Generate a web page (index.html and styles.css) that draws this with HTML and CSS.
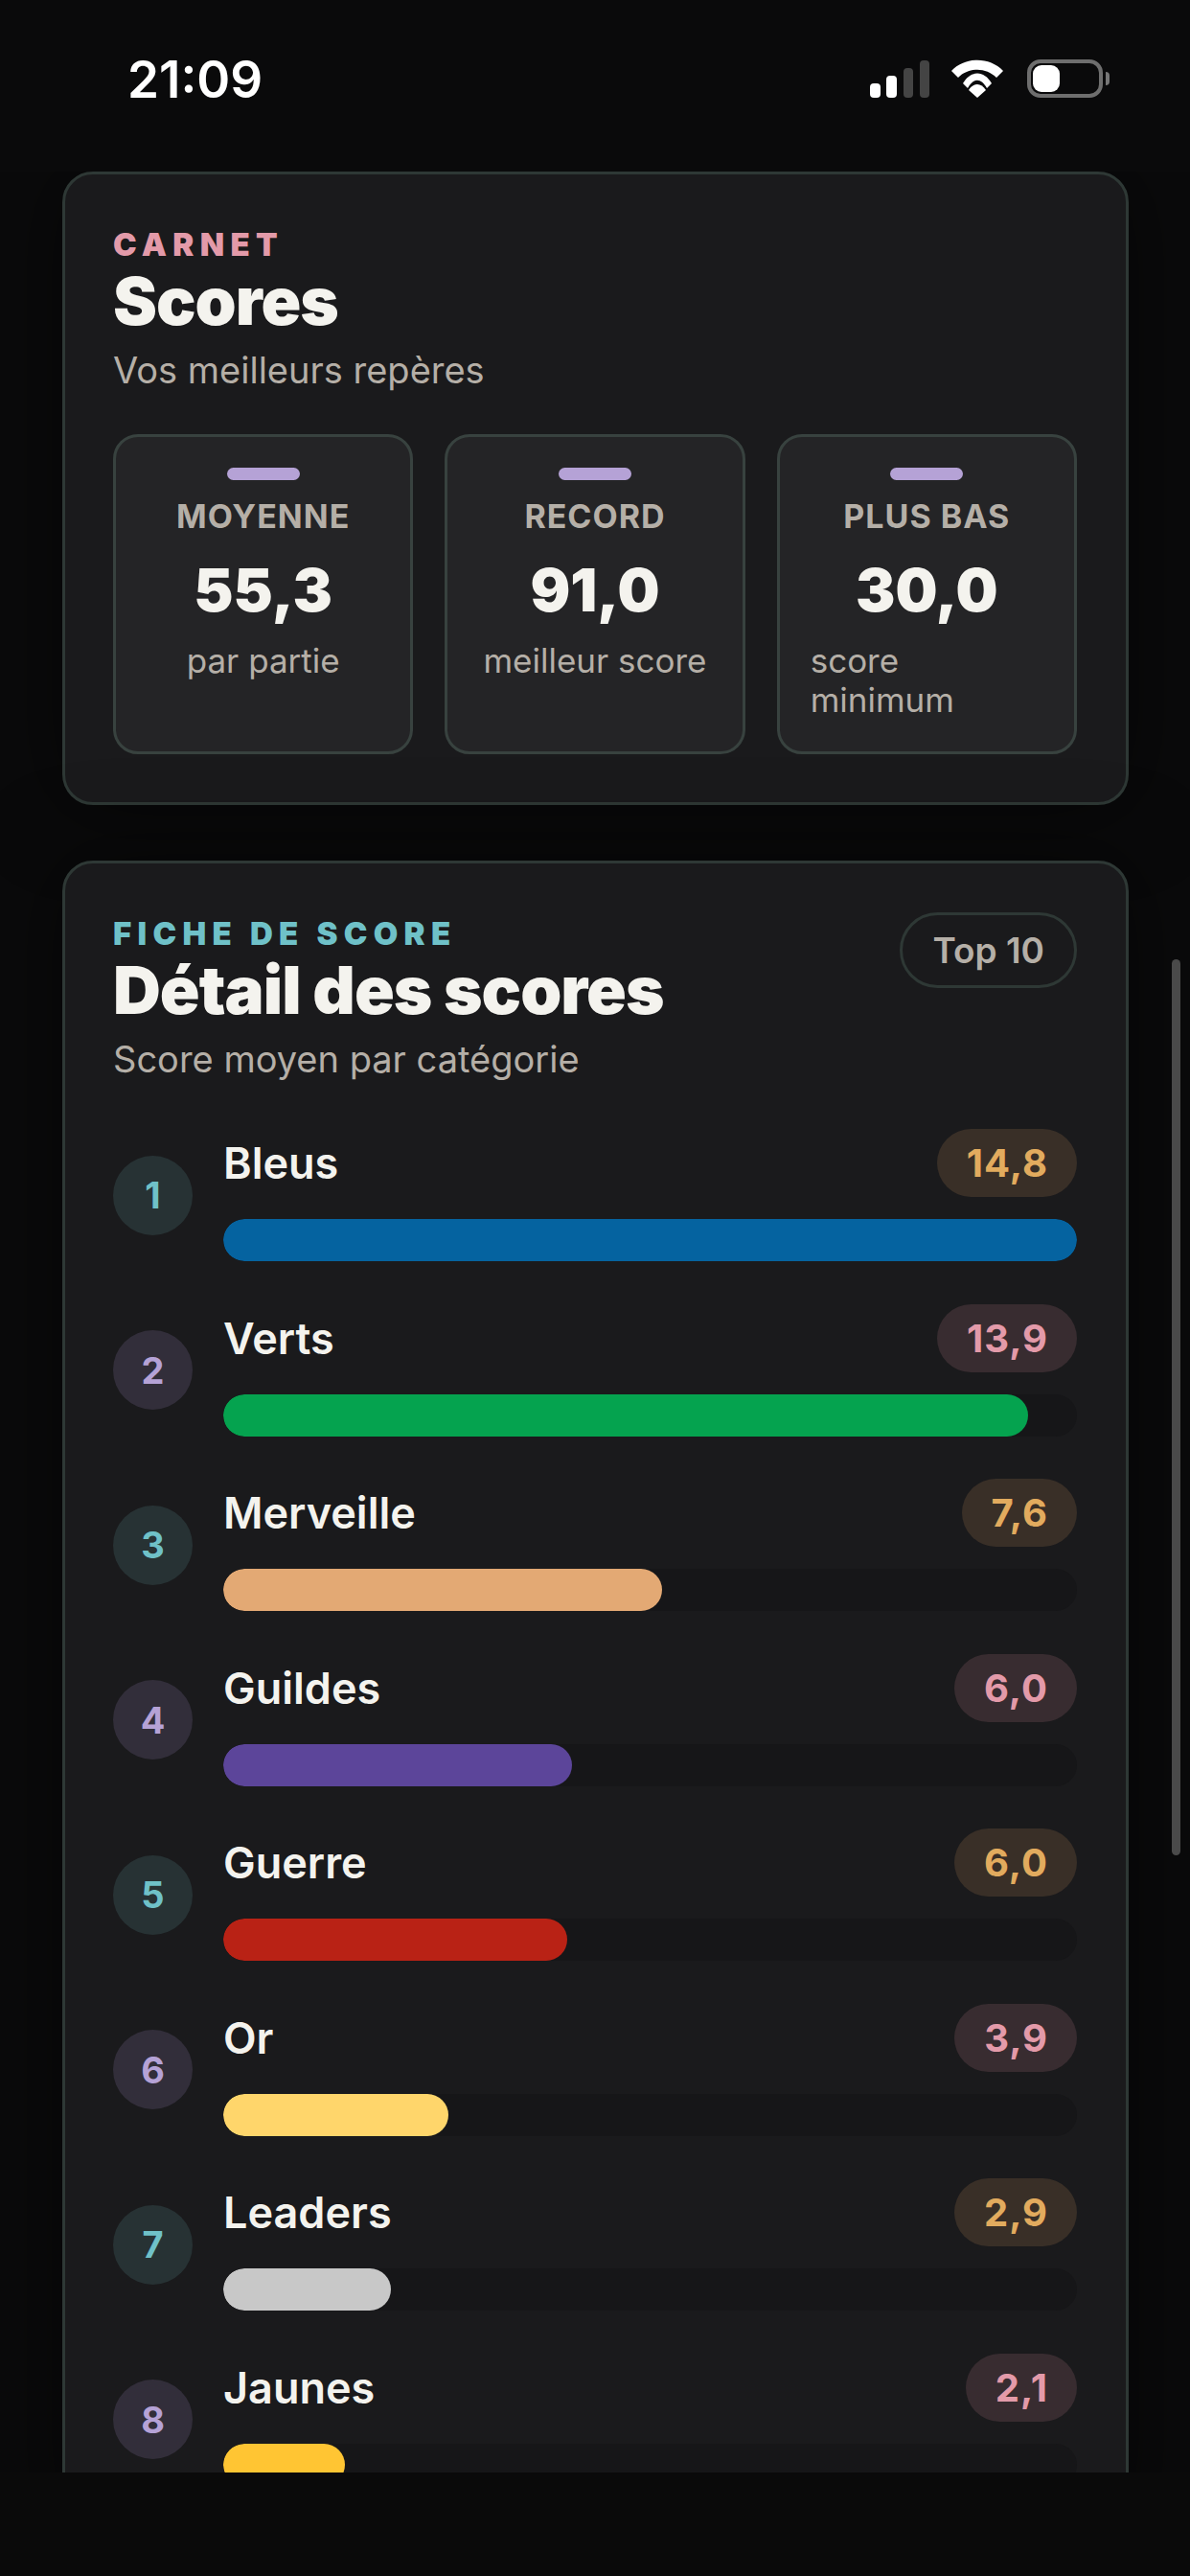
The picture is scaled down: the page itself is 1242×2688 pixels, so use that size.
FILE: index.html
```html
<!DOCTYPE html>
<html lang="fr">
<head>
    <meta charset="UTF-8">
    <meta name="viewport" content="width=device-width, initial-scale=1.0">
    <title>Scores</title>
    <link rel="stylesheet" href="styles.css">
</head>
<body>
    <div class="statusbar">
        <span class="time">21:09</span>
        <div class="status-icons">
            <svg class="signal" width="62" height="39" viewBox="0 0 62 39">
                <rect x="0" y="24" width="11" height="15" rx="4" fill="#fff"/>
                <rect x="17" y="16" width="11" height="23" rx="4" fill="#fff"/>
                <rect x="35" y="8" width="10" height="31" rx="4" fill="#444"/>
                <rect x="52" y="0" width="10" height="39" rx="4" fill="#444"/>
            </svg>
            <svg class="wifi" width="54" height="40" viewBox="0 0 54 40">
                <path d="M0 12C14 -3 40 -3 54 12L47 19C36 8 18 8 7 19Z" fill="#fff"/>
                <path d="M12 25C20 11 34 11 42 25L37 30C31 19 23 19 17 30Z" fill="#fff"/>
                <path d="M18 32C23 24 31 24 36 32L27 40Z" fill="#fff"/>
            </svg>
            <div class="battery"><div class="battery-level"></div></div>
            <div class="battery-nub"></div>
        </div>
    </div>

    <div class="scroller">
        <section class="card">
            <div class="eyebrow pink">CARNET</div>
            <h1 class="title">Scores</h1>
            <p class="subtitle">Vos meilleurs repères</p>
            <div class="stats">
                <div class="stat">
                    <div class="stat-mark"></div>
                    <div class="stat-label">MOYENNE</div>
                    <div class="stat-value">55,3</div>
                    <div class="stat-note">par partie</div>
                </div>
                <div class="stat">
                    <div class="stat-mark"></div>
                    <div class="stat-label">RECORD</div>
                    <div class="stat-value">91,0</div>
                    <div class="stat-note">meilleur score</div>
                </div>
                <div class="stat">
                    <div class="stat-mark"></div>
                    <div class="stat-label">PLUS BAS</div>
                    <div class="stat-value">30,0</div>
                    <div class="stat-note">score minimum</div>
                </div>
            </div>
        </section>

        <section class="card">
            <div class="card-head">
                <div>
                    <div class="eyebrow teal">FICHE DE SCORE</div>
                    <h2 class="title">Détail des scores</h2>
                    <p class="subtitle">Score moyen par catégorie</p>
                </div>
                <div class="tag">Top 10</div>
            </div>
            <div class="rows">
                <div class="row">
                    <div class="rank rank-teal">1</div>
                    <div class="row-body">
                        <div class="row-head"><span class="row-name">Bleus</span><span class="pill pill-gold">14,8</span></div>
                        <div class="track"><div class="fill" style="width: 100%; background: #0563a0"></div></div>
                    </div>
                </div>
                <div class="row">
                    <div class="rank rank-purple">2</div>
                    <div class="row-body">
                        <div class="row-head"><span class="row-name">Verts</span><span class="pill pill-pink">13,9</span></div>
                        <div class="track"><div class="fill" style="width: 94.3%; background: #05a34f"></div></div>
                    </div>
                </div>
                <div class="row">
                    <div class="rank rank-teal">3</div>
                    <div class="row-body">
                        <div class="row-head"><span class="row-name">Merveille</span><span class="pill pill-gold">7,6</span></div>
                        <div class="track"><div class="fill" style="width: 51.4%; background: #e3a974"></div></div>
                    </div>
                </div>
                <div class="row">
                    <div class="rank rank-purple">4</div>
                    <div class="row-body">
                        <div class="row-head"><span class="row-name">Guildes</span><span class="pill pill-pink">6,0</span></div>
                        <div class="track"><div class="fill" style="width: 40.8%; background: #5c459a"></div></div>
                    </div>
                </div>
                <div class="row">
                    <div class="rank rank-teal">5</div>
                    <div class="row-body">
                        <div class="row-head"><span class="row-name">Guerre</span><span class="pill pill-gold">6,0</span></div>
                        <div class="track"><div class="fill" style="width: 40.3%; background: #b92215"></div></div>
                    </div>
                </div>
                <div class="row">
                    <div class="rank rank-purple">6</div>
                    <div class="row-body">
                        <div class="row-head"><span class="row-name">Or</span><span class="pill pill-pink">3,9</span></div>
                        <div class="track"><div class="fill" style="width: 26.4%; background: #ffd66b"></div></div>
                    </div>
                </div>
                <div class="row">
                    <div class="rank rank-teal">7</div>
                    <div class="row-body">
                        <div class="row-head"><span class="row-name">Leaders</span><span class="pill pill-gold">2,9</span></div>
                        <div class="track"><div class="fill" style="width: 19.6%; background: #c8c8c8"></div></div>
                    </div>
                </div>
                <div class="row">
                    <div class="rank rank-purple">8</div>
                    <div class="row-body">
                        <div class="row-head"><span class="row-name">Jaunes</span><span class="pill pill-pink">2,1</span></div>
                        <div class="track"><div class="fill" style="width: 14.2%; background: #ffc533"></div></div>
                    </div>
                </div>
            </div>
        </section>
        <div class="scrollbar"></div>
    </div>
    <div class="bottom"></div>
</body>
</html>
```

FILE: styles.css
```css
* {
    box-sizing: border-box;
}
body {
    font-family: Inter, "Liberation Sans", sans-serif;
    display: flex;
    flex-direction: column;
    height: 2688px;
    margin: 0;
    overflow: hidden;
    background-color: #0a0a0b;
    color: #f4f3ee;
}
.statusbar {
    height: 179px;
    flex-shrink: 0;
    display: flex;
    justify-content: space-between;
    align-items: flex-start;
    padding: 62px 84px 0 133px;
}
.time {
    font-size: 53px;
    line-height: 42px;
    font-weight: 600;
    color: #fff;
}
.status-icons {
    display: flex;
    align-items: flex-end;
    height: 40px;
}
.signal {
    margin-right: 23px;
}
.wifi {
    margin-right: 25px;
}
.battery {
    width: 79px;
    height: 40px;
    border: 4px solid #6e6e6e;
    border-radius: 14px;
    padding: 2px;
}
.battery-level {
    width: 28px;
    height: 100%;
    background-color: #fff;
    border-radius: 9px;
}
.battery-nub {
    width: 4px;
    height: 14px;
    margin: 0 0 13px 3px;
    background-color: #777;
    border-radius: 0 4px 4px 0;
}

.scroller {
    flex: 1;
    position: relative;
    overflow: hidden;
    padding: 0 64px 0 65px;
}
.card {
    background-color: #1a1a1c;
    border: 3px solid #2e3835;
    border-radius: 32px;
    padding: 51px 51px 50px 50px;
    margin-bottom: 58px;
    box-shadow: 0 0 90px rgba(0, 0, 0, 0.5);
}
.eyebrow {
    font-size: 33px;
    line-height: 44px;
    font-weight: 900;
    letter-spacing: 6.3px;
}
.pink { color: #e39aa9; }
.teal { color: #6fc1c8; }
.title {
    margin: 0;
    font-size: 69px;
    line-height: 74px;
    font-weight: 900;
    letter-spacing: -1px;
    color: #f4f3ee;
}
.subtitle {
    margin: 12px 0 0;
    font-size: 38px;
    line-height: 46px;
    color: #b5afa7;
}
.stats {
    display: grid;
    grid-template-columns: repeat(3, 1fr);
    gap: 33px;
    margin-top: 44px;
}
.stat {
    height: 334px;
    display: flex;
    flex-direction: column;
    align-items: center;
    padding: 32px 32px 0;
    background-color: #242426;
    border: 3px solid #38423f;
    border-radius: 26px;
}
.stat-mark {
    width: 76px;
    height: 13px;
    flex-shrink: 0;
    border-radius: 7px;
    background-color: #b5a2d6;
}
.stat-label {
    margin-top: 16px;
    font-size: 34px;
    line-height: 44px;
    font-weight: 700;
    letter-spacing: 1px;
    color: #b5afa7;
}
.stat-value {
    margin-top: 17px;
    font-size: 62px;
    line-height: 76px;
    font-weight: 900;
    color: #f4f3ee;
}
.stat-note {
    margin-top: 15px;
    font-size: 35px;
    line-height: 41px;
    color: #b5afa7;
}

.card-head {
    display: flex;
    justify-content: space-between;
    align-items: flex-start;
}
.tag {
    height: 79px;
    padding: 0 31px;
    display: flex;
    align-items: center;
    font-size: 37px;
    font-weight: 600;
    color: #b5afa7;
    border: 3px solid #2e3835;
    border-radius: 40px;
}
.rows {
    display: flex;
    flex-direction: column;
    gap: 44.5px;
    margin-top: 50px;
}
.row {
    display: flex;
    align-items: center;
    gap: 32px;
}
.rank {
    width: 83px;
    height: 83px;
    flex-shrink: 0;
    display: flex;
    align-items: center;
    justify-content: center;
    border-radius: 50%;
    font-size: 38px;
    font-weight: 700;
}
.rank-teal {
    background-color: #273234;
    color: #6fc1c8;
}
.rank-purple {
    background-color: #322e3a;
    color: #b5a2d6;
}
.row-body {
    flex: 1;
    min-width: 0;
}
.row-head {
    display: flex;
    justify-content: space-between;
    align-items: center;
    margin-bottom: 23px;
}
.row-name {
    font-size: 45px;
    font-weight: 600;
    color: #f4f3ee;
}
.pill {
    height: 71px;
    padding: 0 30px 0 31px;
    display: flex;
    align-items: center;
    border-radius: 36px;
    font-size: 40px;
    font-weight: 700;
    letter-spacing: 1px;
}
.pill-gold {
    background-color: #392f27;
    color: #e2ab5e;
}
.pill-pink {
    background-color: #382c30;
    color: #e39aa9;
}
.track {
    height: 44px;
    border-radius: 22px;
    background-color: #161618;
    overflow: hidden;
}
.fill {
    height: 100%;
    border-radius: 22px;
}
.scrollbar {
    position: absolute;
    top: 822px;
    right: 10px;
    width: 9px;
    height: 935px;
    border-radius: 5px;
    background-color: #4a4a4a;
}
.bottom {
    height: 108px;
    flex-shrink: 0;
    background-color: #0a0a0a;
}
```
